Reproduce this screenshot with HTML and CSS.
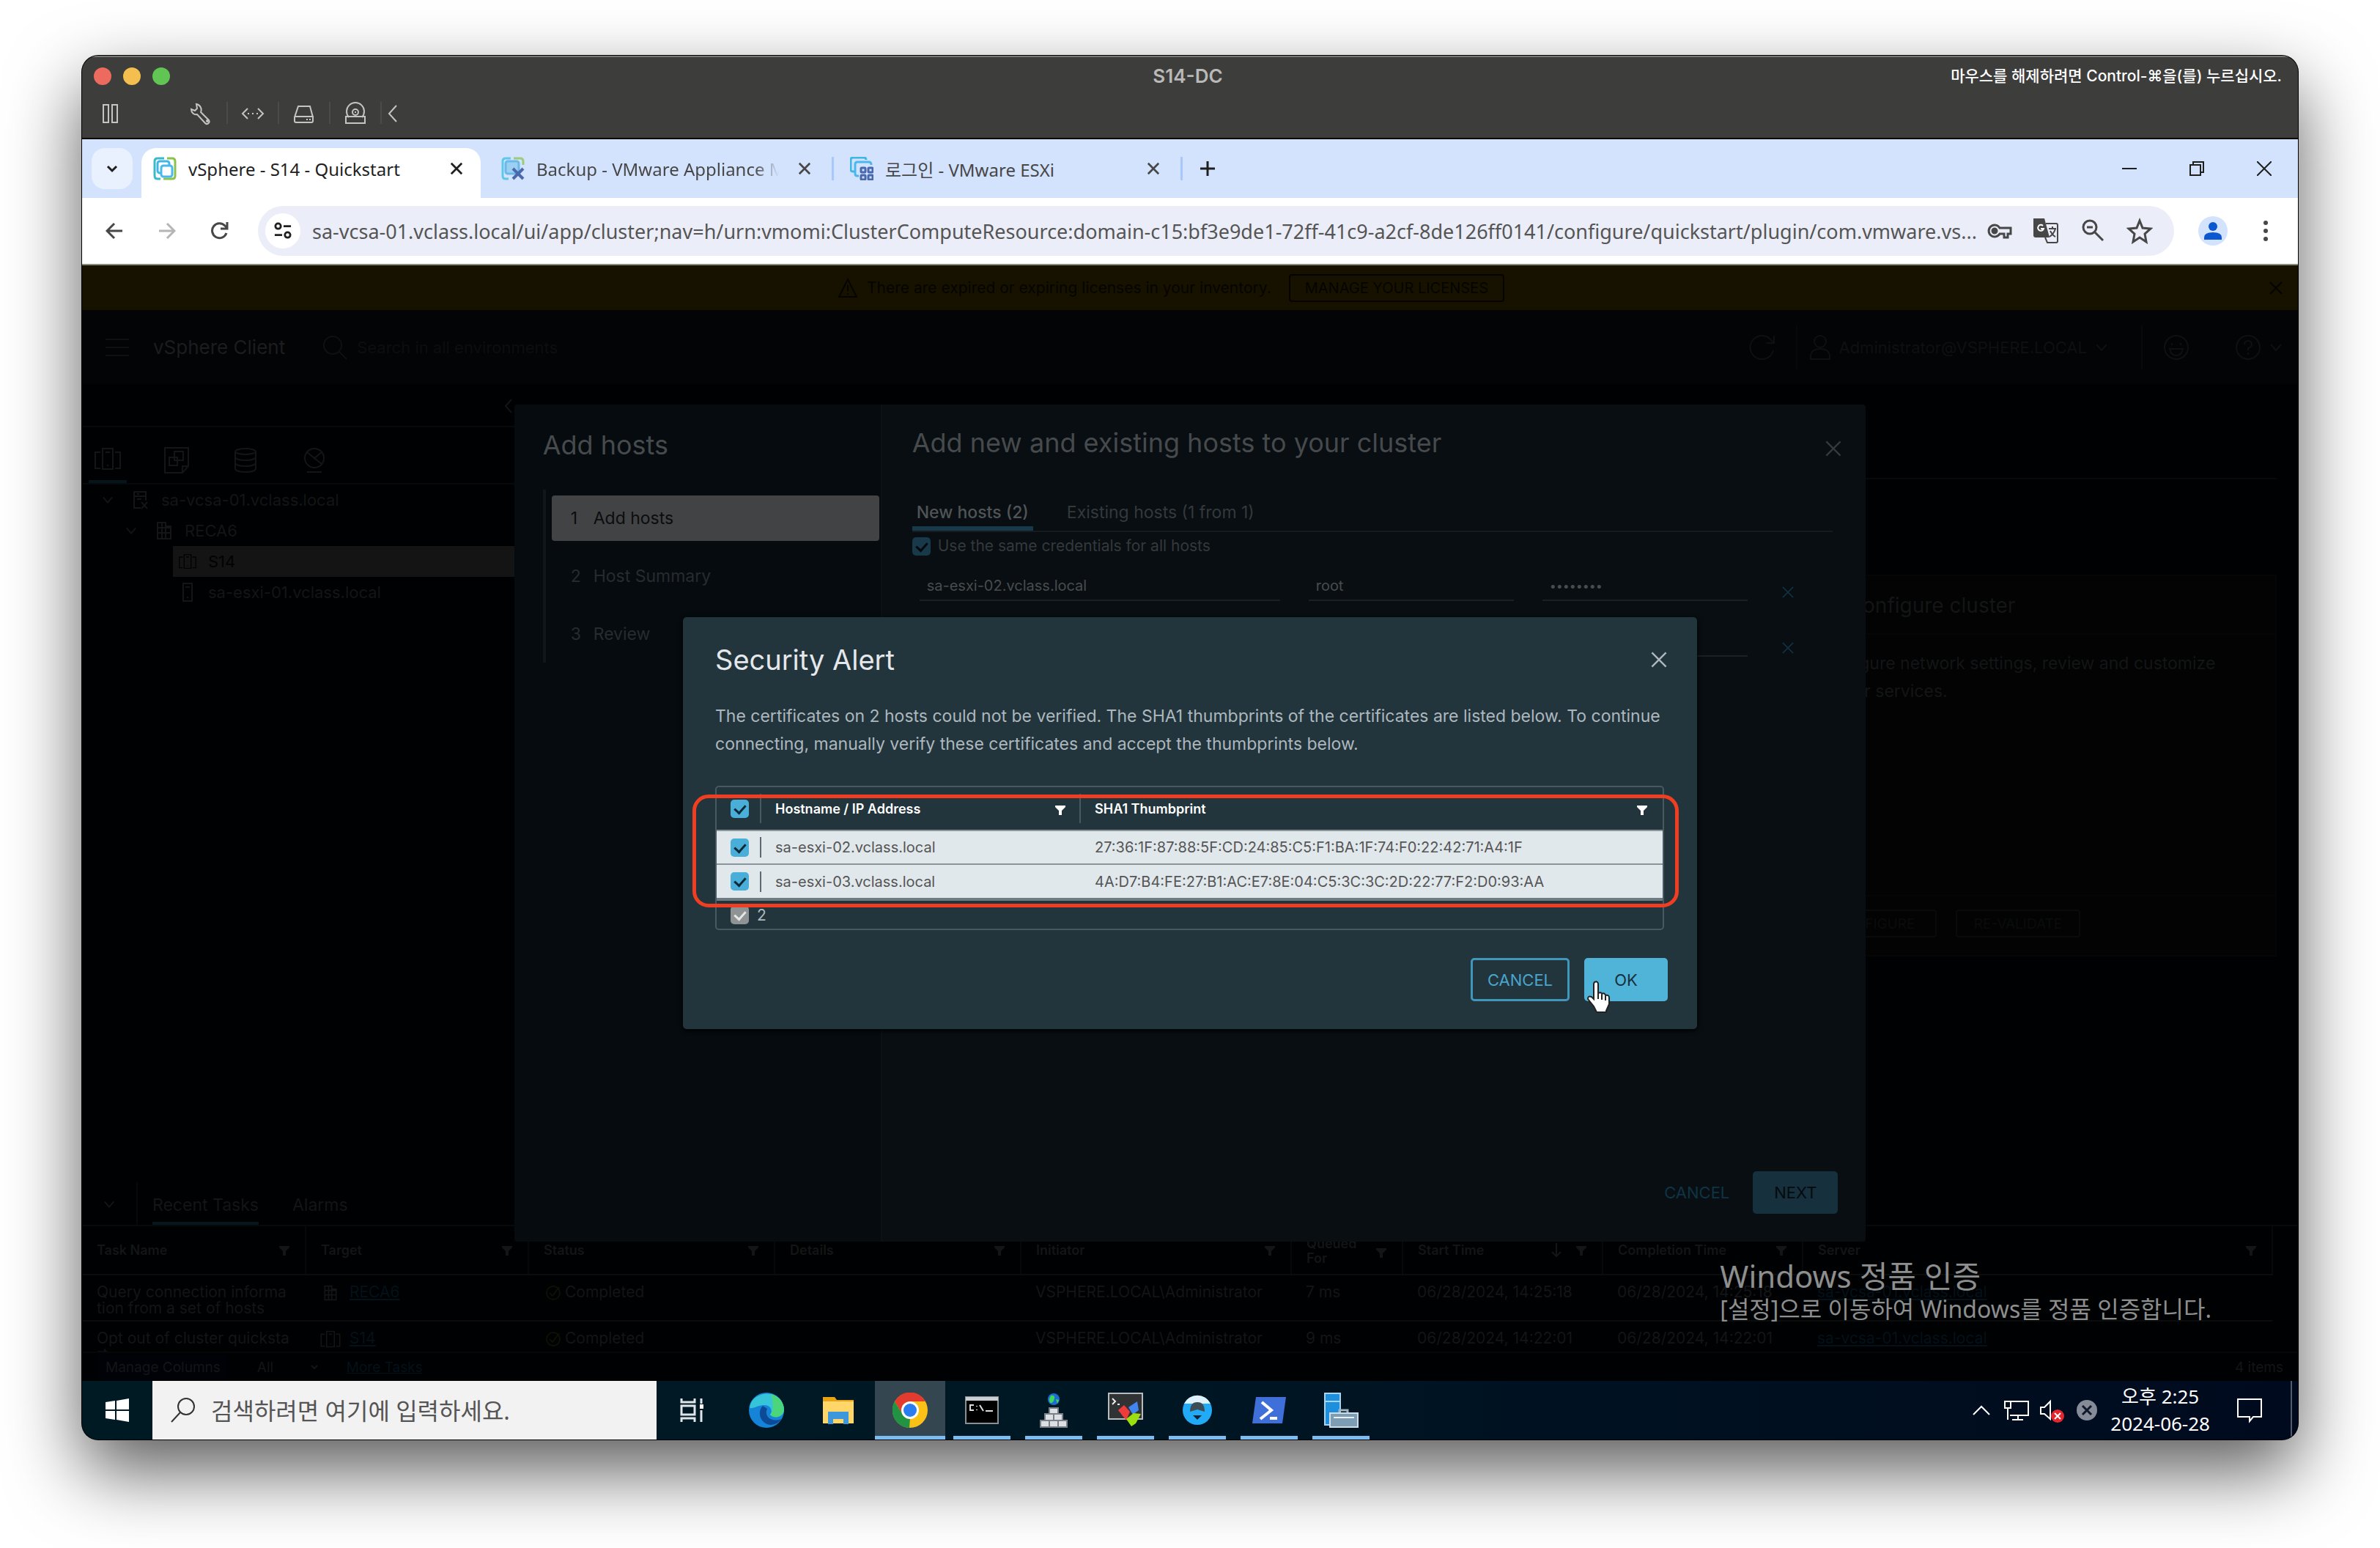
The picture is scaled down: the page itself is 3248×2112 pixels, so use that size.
FILE: index.html
```html
<!doctype html>
<html lang="ko">
<head>
<meta charset="utf-8">
<meta name="viewport" content="width=device-width, initial-scale=1">
<title>S14-DC</title>
<link rel="stylesheet" href="styles.css">
</head>

<body>
<svg class="sprite" aria-hidden="true">
	<symbol id="i-x" viewBox="0 0 20 20"><path d="M2 2l16 16M18 2L2 18"/></symbol>
	<symbol id="i-down" viewBox="0 0 20 20"><path d="M3 6l7 8 7-8"/></symbol>
	<symbol id="i-left" viewBox="0 0 20 20"><path d="M14 1L6 10l8 9"/></symbol>
	<symbol id="i-filter" viewBox="0 0 16 16"><path d="M1 2h14v2l-5 5v6H6V9L1 4z" fill="currentColor" stroke="none"/></symbol>
	<symbol id="i-search" viewBox="0 0 36 36"><circle cx="15" cy="15" r="12"/><path d="M24 24l10 10"/></symbol>
	<symbol id="i-vc" viewBox="0 0 24 28"><path d="M12 25H3V3h16v12M3 9h16M7 6h3M7 13h6M13 17l8 9M21 17l-8 9"/></symbol>
	<symbol id="i-dc" viewBox="0 0 24 28"><path d="M3 3h11v22H3zM14 8h7v17h-7M3 10h18M3 17h18M9 3v22"/></symbol>
	<symbol id="i-cluster" viewBox="0 0 36 32"><path d="M11 2h14v28H11zM8 7H1v22h7M28 7h7v22h-7M15 7h6M18 24v2"/></symbol>
	<symbol id="i-host" viewBox="0 0 20 28"><path d="M4 2h12v24H4zM7 7h6M10 20v2"/></symbol>
	<symbol id="i-ok" viewBox="0 0 24 24"><circle cx="12" cy="12" r="9"/><path d="M7 12l4 4 9-12"/></symbol>
</svg>

<div class="vm-janela">

	<!-- barra do mac -->
	<header class="mac-barra">
		<div class="mac-titulo">
			<div class="mac-luzes"><button class="vermelho" aria-label="close"></button><button class="amarelo" aria-label="minimize"></button><button class="verde" aria-label="zoom"></button></div>
			<h1>S14-DC</h1>
			<span class="mac-dica">마우스를 해제하려면 Control-⌘을(를) 누르십시오.</span>
		</div>
		<div class="mac-icones">
			<button class="mac-pausa" aria-label="pause"><svg viewBox="0 0 28 32"><path d="M5 4h7v24H5zM17 4h7v24h-7z"/></svg></button>
			<button aria-label="settings"><svg viewBox="0 0 32 32"><path d="M9 3l1 6-3 3-5-2c0 5 4 8 8 7l11 12c3 3 7-1 5-4L15 14c2-5-1-10-6-11z"/><circle cx="24" cy="26" r="1"/></svg></button>
			<button aria-label="network"><svg viewBox="0 0 32 32"><path d="M9 9l-7 7 7 7M23 9l7 7-7 7"/><path d="M9 16h15" stroke-dasharray="2 4"/></svg></button>
			<button aria-label="disk"><svg viewBox="0 0 32 32"><path d="M8 6h16l4 15v5q0 2-2 2H5q-2 0-2-2v-5L8 6zM3 20h26M19 24h2M23 24h2"/></svg></button>
			<button aria-label="cd"><svg viewBox="0 0 32 32"><path d="M7 21a12 12 0 1 1 18 0"/><circle cx="16" cy="14" r="4"/><path d="M3 20h26v9H3zM16 13v2"/></svg></button>
			<button class="mac-seta" aria-label="back"><svg viewBox="0 0 16 32"><path d="M13 5L3 16l10 11"/></svg></button>
		</div>
	</header>

	<!-- abas do chrome -->
	<nav class="abas">
		<button class="abas-lista" aria-label="tabs"><svg viewBox="0 0 20 20"><path d="M4 7l6 6 6-6"/></svg></button>
		<div class="aba ativa">
			<svg class="aba-icone" viewBox="0 0 32 32"><path d="M15 2H6Q2 2 2 6v20q0 4 4 4h4" stroke="#3bb9c9"/><path d="M19 2h7q4 0 4 4v20q0 4-4 4H14" stroke="#8bc34a"/><rect x="6" y="6" width="16" height="16" rx="3" stroke="#41b6e6"/><rect x="11" y="12" width="15" height="15" rx="3" stroke="#4ab8ef" fill="#fff"/></svg>
			<span class="aba-texto">vSphere - S14 - Quickstart</span>
			<button class="aba-fechar" aria-label="close tab"><svg viewBox="0 0 20 20"><use href="#i-x"/></svg></button>
		</div>
		<div class="aba">
			<svg class="aba-icone" viewBox="0 0 32 32"><path d="M13 2H6Q2 2 2 6v20q0 4 4 4h4" stroke="#5cc9e8"/><path d="M17 2h9q4 0 4 4v5" stroke="#9ccc7a"/><rect x="6" y="6" width="18" height="17" rx="3" stroke="#6bb9ea" fill="#9bd0f3"/><path d="M16 16l14 14M30 16L16 30" stroke="#4a69ad" stroke-width="4"/></svg>
			<span class="aba-texto aba-cortada">Backup - VMware Appliance Management</span>
			<button class="aba-fechar" aria-label="close tab"><svg viewBox="0 0 20 20"><use href="#i-x"/></svg></button>
		</div>
		<div class="aba">
			<svg class="aba-icone" viewBox="0 0 32 32"><path d="M6 20H4q-3 0-3-3V4q0-3 3-3h15q3 0 3 3" stroke="#41b6e6"/><path d="M12 26h-2q-3 0-3-3V10q0-3 3-3h16q3 0 3 4" stroke="#4ab8ef"/><g stroke="#4a69ad"><rect x="15" y="15" width="6" height="6" rx="1"/><rect x="25" y="15" width="6" height="6" rx="1"/><rect x="15" y="25" width="6" height="6" rx="1"/><rect x="25" y="25" width="6" height="6" rx="1"/></g></svg>
			<span class="aba-texto">로그인 - VMware ESXi</span>
			<button class="aba-fechar" aria-label="close tab"><svg viewBox="0 0 20 20"><use href="#i-x"/></svg></button>
		</div>
		<button class="aba-nova" aria-label="new tab"><svg viewBox="0 0 20 20"><path d="M10 0v20M0 10h20"/></svg></button>
		<div class="janela-botoes">
			<button aria-label="minimize"><svg viewBox="0 0 20 20"><path d="M0 10h20"/></svg></button>
			<button aria-label="restore"><svg viewBox="0 0 20 20"><path d="M1 5h14v14H1zM5 5V1h14v14h-4"/></svg></button>
			<button aria-label="close"><svg viewBox="0 0 20 20"><path d="M0 0l20 20M20 0L0 20"/></svg></button>
		</div>
	</nav>

	<div class="navegacao">
		<button aria-label="back"><svg viewBox="0 0 24 24"><path d="M23 12H2M12 2L2 12l10 10"/></svg></button>
		<button class="apagado" aria-label="forward"><svg viewBox="0 0 24 24"><path d="M1 12h21M12 2l10 10-10 10"/></svg></button>
		<button aria-label="reload"><svg viewBox="0 0 24 24"><path d="M21 15a10 10 0 1 1-2-10l3 3M22 0v9h-9"/></svg></button>
		<div class="endereco">
			<span class="endereco-info"><svg viewBox="0 0 26 26"><circle cx="6" cy="6" r="4"/><path d="M14 6h11M1 19h11"/><circle cx="20" cy="19" r="4"/></svg></span>
			<input type="text" aria-label="address" value="sa-vcsa-01.vclass.local/ui/app/cluster;nav=h/urn:vmomi:ClusterComputeResource:domain-c15:bf3e9de1-72ff-41c9-a2cf-8de126ff0141/configure/quickstart/plugin/com.vmware.vs...">
			<button aria-label="passwords"><svg viewBox="0 0 36 36"><path d="M19 14a8 8 0 1 0 0 8h6v5h5v-5h4v-8z"/><circle cx="12" cy="18" r="3" fill="currentColor"/></svg></button>
			<button aria-label="translate"><svg viewBox="0 0 36 36"><path d="M1 1h15l7 26H4q-3 0-3-3z" fill="currentColor" stroke="none"/><path d="M18 8h14q2 0 2 2v22q0 2-2 2H20l-3-7" stroke-width="2"/><path d="M22 15h10M27 12v3M31 15q-2 7-8 11M24 18q3 6 7 8" stroke-width="2"/><path d="M14 11a4 4 0 1 0 1 4h-4" stroke="#fff" stroke-width="2"/></svg></button>
			<button aria-label="zoom"><svg viewBox="0 0 36 36"><circle cx="14" cy="13" r="9"/><path d="M21 20l11 11M10 13h8"/></svg></button>
			<button aria-label="bookmark"><svg viewBox="0 0 36 36"><path d="M18 4l4 10 11 1-8 7 2 11-9-6-9 6 2-11-8-7 11-1z"/></svg></button>
		</div>
		<button class="perfil" aria-label="profile"><svg viewBox="0 0 40 40"><circle cx="20" cy="20" r="20" fill="#d3e3fd" stroke="none"/><circle cx="20" cy="14" r="6" fill="#0b57d0" stroke="none"/><path d="M8 32v-3q0-7 12-7t12 7v3z" fill="#0b57d0" stroke="none"/></svg></button>
		<button class="menu" aria-label="menu"><svg viewBox="0 0 8 30"><g fill="currentColor" stroke="none"><circle cx="4" cy="4" r="3"/><circle cx="4" cy="15" r="3"/><circle cx="4" cy="26" r="3"/></g></svg></button>
	</div>

	<!-- vsphere -->
	<main class="pagina">
		<div class="aviso">
			<svg viewBox="0 0 28 28"><path d="M14 2l12 24H2zM14 10v8M14 21v2"/></svg>
			<span>There are expired or expiring licenses in your inventory.</span>
			<button>MANAGE YOUR LICENSES</button>
			<button class="aviso-fechar" aria-label="close"><svg viewBox="0 0 20 20"><use href="#i-x"/></svg></button>
		</div>
		<div class="vs-topo">
			<svg class="vs-menu" viewBox="0 0 32 28"><path d="M0 3h32M0 14h32M0 25h32"/></svg>
			<span class="vs-nome">vSphere Client</span>
			<svg class="vs-lupa"><use href="#i-search"/></svg>
			<input type="text" aria-label="search" placeholder="Search in all environments">
			<div class="vs-direita">
				<svg class="g" viewBox="0 0 36 36"><path d="M33 22a16 16 0 1 1-3-14l4 4M34 2v10H24"/></svg>
				<div class="vs-usuario">
					<svg viewBox="0 0 30 36"><circle cx="15" cy="10" r="8"/><path d="M2 34V28q2-8 13-8t13 8v6z"/></svg>
					<span>Administrator@VSPHERE.LOCAL</span>
					<svg class="p"><use href="#i-down"/></svg>
				</div>
				<svg class="g" viewBox="0 0 36 36"><circle cx="18" cy="18" r="16"/><path d="M9 20h18q-2 9-9 9t-9-9zM12 12v3M24 12v3"/></svg>
				<div class="vs-ajuda">
					<svg class="g" viewBox="0 0 36 36"><circle cx="18" cy="18" r="16"/><path d="M13 14q0-5 5-5t5 5q0 3-5 5v3M18 25v3"/></svg>
					<svg class="p"><use href="#i-down"/></svg>
				</div>
			</div>
		</div>

		<div class="vs-corpo">
			<aside class="vs-lado">
				<div class="vs-lado-vazio"><svg><use href="#i-left"/></svg></div>
				<div class="vs-lado-abas">
					<span class="sel"><svg><use href="#i-cluster"/></svg></span>
					<span><svg viewBox="0 0 36 36"><path d="M2 1h32v25l-8 9H2zM15 6h12v12H15zM8 14h11v11H8zM26 35v-9h8"/></svg></span>
					<span><svg viewBox="0 0 36 36"><ellipse cx="18" cy="6" rx="14" ry="4"/><path d="M4 6v24q2 4 14 4t14-4V6M4 14q2 4 14 4t14-4M4 22q2 4 14 4t14-4"/></svg></span>
					<span><svg viewBox="0 0 36 36"><circle cx="18" cy="15" r="13"/><path d="M8 7l20 16M28 7L17 16M8 34h20"/></svg></span>
				</div>
				<ul class="arvore">
					<li><svg class="seta"><use href="#i-down"/></svg><svg><use href="#i-vc"/></svg>sa-vcsa-01.vclass.local</li>
					<li class="n2"><svg class="seta"><use href="#i-down"/></svg><svg><use href="#i-dc"/></svg>RECA6</li>
					<li class="n3 marcado"><svg><use href="#i-cluster"/></svg>S14</li>
					<li class="n3"><svg><use href="#i-host"/></svg>sa-esxi-01.vclass.local</li>
				</ul>
			</aside>
			<section class="vs-conteudo">
				<div class="vs-cabeca"></div>
				<article class="cartao">
					<h2>3. Configure cluster</h2>
					<p>Configure network settings, review and customize cluster services.</p>
					<div class="cartao-botoes"><button>CONFIGURE</button><button>RE-VALIDATE</button></div>
				</article>
			</section>
		</div>

		<section class="tarefas">
			<div class="tarefas-abas">
				<svg><use href="#i-down"/></svg>
				<span class="sel">Recent Tasks</span>
				<span>Alarms</span>
			</div>
			<div class="tarefas-lista">
				<table>
					<colgroup><col class="c1"><col class="c2"><col class="c3"><col class="c4"><col class="c5"><col class="c6"><col class="c7"><col class="c7"><col></colgroup>
					<thead>
						<tr>
							<th><div>Task Name<svg><use href="#i-filter"/></svg></div></th>
							<th><div>Target<svg><use href="#i-filter"/></svg></div></th>
							<th><div>Status<svg><use href="#i-filter"/></svg></div></th>
							<th><div>Details<svg><use href="#i-filter"/></svg></div></th>
							<th><div>Initiator<svg><use href="#i-filter"/></svg></div></th>
							<th class="dupla"><div>Queued<br>For<svg><use href="#i-filter"/></svg></div></th>
							<th><div>Start Time<svg class="ordem" viewBox="0 0 16 20"><path d="M8 0v18M2 12l6 6 6-6"/></svg><svg><use href="#i-filter"/></svg></div></th>
							<th><div>Completion Time<svg><use href="#i-filter"/></svg></div></th>
							<th><div>Server<svg><use href="#i-filter"/></svg></div></th>
						</tr>
					</thead>
					<tbody>
						<tr>
							<td>Query connection informa<br>tion from a set of hosts</td>
							<td><svg><use href="#i-dc"/></svg> <a href="#">RECA6</a></td>
							<td><svg class="feito"><use href="#i-ok"/></svg>Completed</td>
							<td></td>
							<td>VSPHERE.LOCAL\Administrator</td>
							<td>7 ms</td>
							<td>06/28/2024, 14:25:18</td>
							<td>06/28/2024, 14:25:18</td>
							<td><a href="#">sa-vcsa-01.vclass.local</a></td>
						</tr>
						<tr>
							<td>Opt out of cluster quicksta<br>rt</td>
							<td><svg><use href="#i-cluster"/></svg> <a href="#">S14</a></td>
							<td><svg class="feito"><use href="#i-ok"/></svg>Completed</td>
							<td></td>
							<td>VSPHERE.LOCAL\Administrator</td>
							<td>9 ms</td>
							<td>06/28/2024, 14:22:01</td>
							<td>06/28/2024, 14:22:01</td>
							<td><a href="#">sa-vcsa-01.vclass.local</a></td>
						</tr>
					</tbody>
				</table>
			</div>
			<div class="tarefas-pe">
				<button>Manage Columns</button>
				<select aria-label="filter"><option>All</option></select>
				<a href="#">More Tasks</a>
				<span>4 items</span>
			</div>
		</section>

		<!-- assistente Add hosts -->
		<div class="camada">
			<div class="assistente">
				<div class="passos">
					<h2>Add hosts</h2>
					<ol>
						<li class="atual"><span>1</span>Add hosts</li>
						<li><span>2</span>Host Summary</li>
						<li><span>3</span>Review</li>
					</ol>
				</div>
				<div class="painel">
					<div class="painel-topo">
						<h2>Add new and existing hosts to your cluster</h2>
						<button aria-label="close"><svg><use href="#i-x"/></svg></button>
					</div>
					<div class="painel-abas">
						<button class="sel">New hosts (2)</button>
						<button>Existing hosts (1 from 1)</button>
					</div>
					<label class="mesma"><input type="checkbox" class="caixa" checked>Use the same credentials for all hosts</label>
					<div class="linha-host">
						<input type="text" class="host" aria-label="host" value="sa-esxi-02.vclass.local">
						<input type="text" class="conta" aria-label="user" value="root">
						<input type="password" class="conta" aria-label="password" value="password">
						<button aria-label="remove"><svg><use href="#i-x"/></svg></button>
					</div>
					<div class="linha-host">
						<input type="text" class="host" aria-label="host" value="sa-esxi-03.vclass.local">
						<input type="text" class="conta" aria-label="user" value="root">
						<input type="password" class="conta" aria-label="password" value="password">
						<button aria-label="remove"><svg><use href="#i-x"/></svg></button>
					</div>
					<div class="painel-pe">
						<button class="cancelar">CANCEL</button>
						<button class="proximo">NEXT</button>
					</div>
				</div>
			</div>
		</div>

		<!-- alerta -->
		<div class="camada">
			<div class="alerta" role="dialog" aria-labelledby="alerta-titulo">
				<div class="alerta-topo">
					<h2 id="alerta-titulo">Security Alert</h2>
					<button aria-label="close"><svg><use href="#i-x"/></svg></button>
				</div>
				<p>The certificates on 2 hosts could not be verified. The SHA1 thumbprints of the certificates are listed below. To continue connecting, manually verify these certificates and accept the thumbprints below.</p>
				<div class="grade">
					<table>
						<colgroup><col class="g1"><col class="g2"><col></colgroup>
						<thead>
							<tr>
								<th><input type="checkbox" class="caixa" aria-label="all" checked></th>
								<th><div>Hostname / IP Address<svg><use href="#i-filter"/></svg></div></th>
								<th><div>SHA1 Thumbprint<svg><use href="#i-filter"/></svg></div></th>
							</tr>
						</thead>
						<tbody>
							<tr>
								<td><input type="checkbox" class="caixa" aria-label="sa-esxi-02" checked></td>
								<td>sa-esxi-02.vclass.local</td>
								<td>27:36:1F:87:88:5F:CD:24:85:C5:F1:BA:1F:74:F0:22:42:71:A4:1F</td>
							</tr>
							<tr>
								<td><input type="checkbox" class="caixa" aria-label="sa-esxi-03" checked></td>
								<td>sa-esxi-03.vclass.local</td>
								<td>4A:D7:B4:FE:27:B1:AC:E7:8E:04:C5:3C:3C:2D:22:77:F2:D0:93:AA</td>
							</tr>
						</tbody>
					</table>
					<label class="grade-pe"><input type="checkbox" class="caixa cinza" checked disabled>2</label>
					<div class="destaque"></div>
				</div>
				<div class="alerta-pe">
					<button class="contorno">CANCEL</button>
					<div class="com-cursor">
						<button class="cheio">OK</button>
						<svg class="cursor" viewBox="0 0 34 46"><path d="M11 3q4-2 5 2v13q4-2 5 1 4-2 5 2 5-1 5 3v9l-4 9v2H14L10 36 2 26q0-5 5-3l3 3V6q0-2 1-3z" fill="#fff" stroke="#222" stroke-width="2"/><path d="M16 18v8M21 20v7M26 22v6" stroke="#222" stroke-width="2"/></svg>
					</div>
				</div>
			</div>
		</div>

		<div class="ativacao">
			<strong>Windows 정품 인증</strong>
			<span>[설정]으로 이동하여 Windows를 정품 인증합니다.</span>
		</div>
	</main>

	<!-- barra de tarefas -->
	<footer class="barra">
		<button class="iniciar" aria-label="start"><svg viewBox="0 0 32 32"><path d="M0 5l13-2v12H0zM15 3l17-3v15H15zM0 17h13v12L0 27zM15 17h17v15l-17-3z" fill="#fff" stroke="none"/></svg></button>
		<label class="busca">
			<svg viewBox="0 0 36 36"><circle cx="22" cy="13" r="11"/><path d="M14 21L2 34"/></svg>
			<input type="text" placeholder="검색하려면 여기에 입력하세요.">
		</label>
		<div class="apps">
			<button aria-label="task view"><svg viewBox="0 0 48 48"><path d="M9 8v5h18V8M9 40v-5h18v5M9 18h18v12H9zM36 8v7M36 24v16" stroke="#dfe6ea" stroke-width="3"/><path d="M34 16h5v6h-5z" fill="#fff"/></svg></button>
			<button aria-label="edge"><svg viewBox="0 0 48 48"><circle cx="24" cy="24" r="24" fill="#1583d8"/><path d="M1 20C5-4 45-6 48 22c1 12-14 14-19 8 4-5 1-13-8-13S3 24 1 20z" fill="#36c5d8"/><path d="M30 2c14 4 20 16 17 25-4 8-14 8-18 3 6-6 4-18 1-28z" fill="#4bd67b"/><path d="M19 18c-8 8-4 24 10 26 8 0 13-4 15-8-12 5-24-3-19-14z" fill="#0d4a95"/></svg></button>
			<button aria-label="explorer"><svg viewBox="0 0 48 48"><path d="M3 6h16l3 4h23v30H3z" fill="#e8a317"/><path d="M3 12h42v30H3z" fill="#ffd667"/><path d="M10 26h28v17h-7v-7H17v7h-7z" fill="#3d97dc"/></svg></button>
			<button class="aberto foco" aria-label="chrome"><svg viewBox="0 0 48 48"><circle cx="24" cy="24" r="24" fill="#fbc116"/><path d="M3 12a24 24 0 0 1 42 0H24L14 30z" fill="#e33b2e"/><path d="M3 12l11 18 10 5-1 13A24 24 0 0 1 3 12z" fill="#229342"/><circle cx="24" cy="24" r="12" fill="#fff"/><circle cx="24" cy="24" r="9" fill="#2a7df0"/></svg></button>
			<button class="aberto" aria-label="cmd"><svg viewBox="0 0 48 48"><path d="M2 6h44v36H2z" fill="#000" stroke="#8a8f93" stroke-width="2"/><path d="M2 6h44v5H2z" fill="#c9ced2"/><path d="M13 17H8v7h5M17 18v1M17 23v1M21 17l5 8M29 25h10" stroke="#ddd" stroke-width="2"/></svg></button>
			<button class="aberto" aria-label="network"><svg viewBox="0 0 48 48"><circle cx="24" cy="9" r="8" fill="#1c6fd0"/><path d="M20 4q6-1 5 4t-4 6-3-5zM27 9l4 1-2 5z" fill="#3fd65a"/><g fill="#dcdfe3" stroke="#7b8086"><path d="M18 21h12v8H18zM12 29h12v9H12zM24 29h12v9H24zM6 38h12v9H6zM18 38h12v9H18zM30 38h12v9H30z"/></g></svg></button>
			<button class="aberto" aria-label="mobaxterm"><svg viewBox="0 0 48 48"><path d="M1 1h46v35H1z" fill="#303234" stroke="#b9bcbf" stroke-width="2"/><path d="M6 8l4 4-4 4M13 16h3" stroke="#eee" stroke-width="2"/><path d="M14 24l8-7 8 9-5 12z" fill="#ee3b3b"/><path d="M28 20l12-8 2 12-8 6z" fill="#3f86f0"/><path d="M25 36l10-8 10 1-7 13-6 4z" fill="#9be00e"/></svg></button>
			<button class="aberto" aria-label="client"><svg viewBox="0 0 48 48"><circle cx="24" cy="24" r="20" fill="#21aaf5"/><path d="M6 15a20 20 0 0 1 36 0z" fill="#dff1fb"/><path d="M14 26q0-13 10-13t10 13l-10-3z" fill="#3d4d58"/><path d="M18 31h12l-6 6z" fill="#123"/></svg></button>
			<button class="aberto" aria-label="powershell"><svg viewBox="0 0 48 48"><path d="M6 6h41l-5 36H1z" fill="#3f6fd8"/><path d="M14 13l13 11-15 12M25 35h10" stroke="#fff" stroke-width="4"/></svg></button>
			<button class="aberto" aria-label="server manager"><svg viewBox="0 0 48 48"><path d="M2 1h21v43H2z" fill="#1e8fdd" stroke="#a9d4f0" stroke-width="2"/><path d="M2 12h21" stroke="#a9d4f0" stroke-width="2"/><path d="M22 28v-4h11v4" stroke="#9fb6c4" stroke-width="3"/><path d="M9 28h38v19H9z" fill="#7c9db3" stroke="#cfdde6" stroke-width="2"/><path d="M14 34h28" stroke="#e8f0f5" stroke-width="2"/></svg></button>
		</div>
		<div class="bandeja">
			<svg viewBox="0 0 36 36"><path d="M7 24l11-11 11 11"/></svg>
			<svg viewBox="0 0 36 36"><path d="M9 6h25v19H9M2 6h8v9H2zM6 15v16M20 25v6M12 31h15"/></svg>
			<svg viewBox="0 0 36 36"><path d="M3 14h5l8-8v24l-8-7H3z"/><circle cx="26" cy="26" r="9" fill="#e3262e" stroke="none"/><path d="M22 22l8 8M30 22l-8 8"/></svg>
			<svg viewBox="0 0 36 36"><circle cx="18" cy="18" r="14" fill="#868b98" stroke="none"/><path d="M12 12l12 12M24 12L12 24" stroke="#10182a" stroke-width="3"/></svg>
			<div class="relogio">오후 2:25<br>2024-06-28</div>
			<svg class="notas" viewBox="0 0 36 36"><path d="M2 3h32v24H23l-5 6v-6H2z"/></svg>
			<i></i>
		</div>
	</footer>
</div>
</body>
</html>
```
FILE: styles.css
```css
*
{
	margin: 0;
	padding: 0;
	box-sizing: border-box;
}
body
{
	display: flex;
	min-height: 100vh;
	padding: 76px 112px 148px;
	background-color: #FFF;
	font-family: Inter, "Noto Sans CJK KR", sans-serif;
	font-size: 23px;
}
button, input, select
{
	font: inherit;
	color: inherit;
	background: none;
	border: none;
	outline: none;
}
svg
{
	display: block;
	flex: none;
	fill: none;
	stroke: currentColor;
	stroke-width: 2px;
}
.sprite
{
	position: absolute;
	width: 0;
	height: 0;
}
h1, h2
{
	font-weight: 400;
}
.vm-janela
{
	flex: 1;
	min-width: 0;
	display: flex;
	flex-direction: column;
	overflow: hidden;
	border-radius: 22px;
	background-color: #000102;
	box-shadow: 0 0 0 1px #000, 0 42px 100px rgba(0,0,0,.65);
}

/* barra do mac */
.mac-barra
{
	height: 114px;
	background-color: #3d3d3b;
	border-top: 2px solid #777772;
	border-bottom: 2px solid #000;
}
.mac-titulo
{
	display: grid;
	grid-template-columns: 1fr auto 1fr;
	align-items: center;
	height: 52px;
	padding: 0 22px 0 16px;
}
.mac-titulo h1
{
	font-size: 26px;
	line-height: 30px;
	font-weight: 600;
	color: #b9b9b8;
}
.mac-luzes
{
	display: flex;
	gap: 16px;
}
.mac-luzes button
{
	width: 24px;
	height: 24px;
	border-radius: 50%;
}
.vermelho { background-color: #ed6a5e; }
.amarelo { background-color: #f4bf4f; }
.verde { background-color: #61c554; }
.mac-dica
{
	justify-self: end;
	font-size: 21px;
	line-height: 30px;
	font-weight: 500;
	color: #FFF;
}
.mac-icones
{
	display: flex;
	align-items: center;
	height: 48px;
	padding-left: 12px;
	color: #c4c4c3;
}
.mac-icones button
{
	display: flex;
	justify-content: center;
	width: 70px;
	height: 30px;
	border-right: 2px solid #4b4b49;
}
.mac-icones button svg
{
	height: 32px;
	width: 32px;
}
.mac-icones .mac-pausa
{
	width: 56px;
	margin-right: 61px;
	justify-content: start;
	padding-left: 10px;
	border: none;
}
.mac-icones .mac-seta
{
	width: 30px;
	border: none;
}

/* chrome */
.abas
{
	display: flex;
	height: 80px;
	padding: 12px 0 0 13px;
	background-color: #d3e3fd;
	color: #1f1f1f;
	font-family: "Noto Sans", "Noto Sans CJK KR", sans-serif;
}
.abas-lista
{
	display: flex;
	align-items: center;
	justify-content: center;
	width: 56px;
	height: 56px;
	margin-right: 12px;
	border-radius: 18px;
	background-color: #e9f1fe;
}
.abas svg
{
	width: 20px;
	height: 20px;
	stroke-width: 3px;
}
.aba
{
	display: flex;
	align-items: center;
	width: 470px;
	margin-right: 6px;
	padding: 0 26px 12px 16px;
	color: #474747;
	border-right: 3px solid transparent;
	border-image: linear-gradient(transparent 18%, #a8c7fa 18%, #a8c7fa 64%, transparent 64%) 1;
}
.aba.ativa
{
	width: 463px;
	margin-right: 12px;
	padding-right: 22px;
	border: none;
	border-radius: 20px 20px 0 0;
	background-color: #FFF;
	color: #1f1f1f;
}
.aba .aba-icone
{
	width: 32px;
	height: 32px;
	margin-right: 16px;
}
.aba-texto
{
	flex: 1;
	overflow: hidden;
	white-space: nowrap;
	font-size: 24px;
}
.aba-cortada
{
	margin-right: 24px;
	mask-image: linear-gradient(90deg, #000 90%, transparent);
}
.aba-fechar
{
	padding: 2px;
}
.aba .aba-fechar svg
{
	width: 18px;
	height: 18px;
}
.aba-nova
{
	height: 56px;
	margin-left: 18px;
}
.janela-botoes
{
	display: flex;
	gap: 72px;
	height: 56px;
	margin-left: auto;
	padding-right: 36px;
}
.janela-botoes svg
{
	stroke-width: 2px;
}
.navegacao
{
	display: flex;
	align-items: center;
	height: 92px;
	padding: 0 40px 0 32px;
	background-color: #FFF;
	border-bottom: 2px solid #8b8a80;
	color: #474747;
}
.navegacao > button
{
	width: 24px;
	margin-right: 48px;
}
.navegacao > button:nth-child(3)
{
	margin-right: 40px;
}
.navegacao svg
{
	width: 24px;
	stroke-width: 3px;
}
.navegacao .apagado
{
	color: #b5b5b5;
}
.endereco
{
	flex: 1;
	min-width: 0;
	display: flex;
	align-items: center;
	gap: 28px;
	height: 68px;
	padding: 0 29px 0 10px;
	border-radius: 34px;
	background-color: #ebeef8;
}
.endereco-info
{
	display: flex;
	align-items: center;
	justify-content: center;
	width: 48px;
	height: 48px;
	margin-right: -12px;
	border-radius: 50%;
	background-color: #FFF;
	color: #1f1f1f;
}
.endereco input
{
	flex: 1;
	min-width: 0;
	margin-right: -26px;
	font-family: "Noto Sans", sans-serif;
	font-size: 27px;
	color: #555;
}
.endereco button svg
{
	width: 36px;
	height: 36px;
}
.navegacao .perfil
{
	width: 40px;
	margin: 0 48px 0 33px;
}
.perfil svg
{
	width: 40px;
}
.navegacao .menu
{
	width: 8px;
	margin: 0;
}
.menu svg
{
	width: 8px;
}

/* vsphere */
.pagina
{
	position: relative;
	flex: 1;
	display: flex;
	flex-direction: column;
	color: #131516;
}
.aviso
{
	display: flex;
	align-items: center;
	justify-content: center;
	gap: 12px;
	height: 61px;
	padding-right: 20px;
	background-color: #171200;
	color: #050400;
	font-size: 21px;
}
.aviso > svg:first-child
{
	width: 28px;
	margin-left: auto;
}
.aviso button
{
	height: 38px;
	margin-left: 12px;
	padding: 0 20px;
	border: 2px solid #050400;
	border-radius: 4px;
	font-size: 20px;
}
.aviso .aviso-fechar
{
	margin-left: auto;
	padding: 0;
	border: none;
}
.aviso-fechar svg
{
	width: 20px;
}
.vs-topo
{
	display: flex;
	align-items: center;
	height: 101px;
	padding: 0 20px 0 32px;
	background-color: #030406;
	color: #0e1011;
}
.vs-menu
{
	width: 32px;
	margin-right: 33px;
}
.vs-nome
{
	font-size: 26px;
	color: #1b1d1e;
}
.vs-lupa
{
	width: 36px;
	height: 36px;
	margin: 0 12px 0 50px;
}
.vs-topo input
{
	width: 400px;
	font-size: 22px;
}
.vs-topo input::placeholder
{
	color: #0c0e10;
}
.vs-direita
{
	display: flex;
	align-items: center;
	gap: 28px;
	margin-left: auto;
	font-size: 22px;
}
.vs-direita .g
{
	width: 36px;
	height: 36px;
}
.vs-direita .p
{
	width: 20px;
	height: 20px;
}
.vs-usuario, .vs-ajuda
{
	display: flex;
	align-items: center;
	gap: 10px;
	height: 60px;
}
.vs-usuario
{
	padding: 0 44px 0 16px;
	border-left: 2px solid #07090b;
	border-right: 2px solid #07090b;
}
.vs-usuario > svg:first-child
{
	width: 30px;
}
.vs-ajuda
{
	margin-left: 34px;
}
.vs-corpo
{
	flex: 1;
	display: flex;
	min-height: 0;
}
.vs-lado
{
	width: 592px;
}
.vs-lado-vazio
{
	display: flex;
	justify-content: flex-end;
	height: 59px;
	padding-top: 20px;
	border-bottom: 2px solid #07090a;
}
.vs-lado-vazio svg
{
	width: 20px;
	height: 20px;
}
.vs-lado-abas
{
	display: flex;
	gap: 42px;
	height: 78px;
	padding-left: 9px;
	border-bottom: 2px solid #07090a;
}
.vs-lado-abas span
{
	display: flex;
	align-items: center;
	justify-content: center;
	width: 52px;
	padding-top: 14px;
}
.vs-lado-abas .sel
{
	border-bottom: 4px solid #05151c;
}
.vs-lado-abas svg
{
	width: 36px;
	height: 36px;
}
.arvore
{
	list-style: none;
	font-size: 22px;
}
.arvore li
{
	display: flex;
	align-items: center;
	gap: 16px;
	height: 42px;
	padding-left: 26px;
}
.arvore svg
{
	width: 24px;
	height: 28px;
}
.arvore .seta
{
	width: 18px;
	height: 18px;
	margin-right: 8px;
}
.arvore .n2
{
	padding-left: 58px;
}
.arvore .n3
{
	margin-left: 124px;
	padding-left: 8px;
}
.arvore .marcado
{
	background-color: #131413;
	color: #020202;
}
.vs-conteudo
{
	flex: 1;
	display: flex;
	flex-direction: column;
	align-items: flex-end;
	padding-right: 29px;
}
.vs-cabeca
{
	width: 100%;
	height: 130px;
	margin-bottom: 130px;
	border-bottom: 2px solid #07090a;
}
.cartao
{
	width: 700px;
	border: 2px solid #050606;
	background-color: #020302;
}
.cartao h2
{
	height: 80px;
	padding-left: 80px;
	line-height: 80px;
	font-size: 28px;
	border-bottom: 2px solid #050606;
}
.cartao p
{
	height: 355px;
	padding: 20px 70px;
	line-height: 38px;
}
.cartao-botoes
{
	display: flex;
	gap: 26px;
	padding: 18px 0 24px 64px;
	border-top: 2px solid #050606;
}
.cartao-botoes button
{
	width: 170px;
	height: 38px;
	border: 2px solid #090b0b;
	border-radius: 4px;
	font-size: 19px;
	color: #0a0c0c;
}

/* recent tasks */
.tarefas a
{
	color: #03111a;
}
.tarefas-abas
{
	display: flex;
	align-items: stretch;
	gap: 46px;
	height: 60px;
	line-height: 62px;
	border-bottom: 2px solid #08090a;
}
.tarefas-abas svg
{
	width: 76px;
	height: 60px;
	padding: 20px 28px;
	margin-right: -26px;
	border-right: 2px solid #08090a;
}
.tarefas-abas .sel
{
	border-bottom: 4px solid #06171b;
}
.tarefas-lista
{
	height: 171px;
	overflow: hidden;
	padding-right: 34px;
}
.tarefas table
{
	width: 100%;
	table-layout: fixed;
	border-collapse: collapse;
	font-size: 21px;
	line-height: 22px;
}
.c1 { width: 305px; }
.c2 { width: 304px; }
.c3, .c4 { width: 336px; }
.c5 { width: 369px; }
.c6 { width: 152px; }
.c7 { width: 273px; }
.tarefas th
{
	height: 66px;
	padding: 23px 20px 0;
	text-align: left;
	vertical-align: top;
	font-size: 18px;
	font-weight: 600;
	line-height: 20px;
	border-right: 2px solid #070808;
	border-bottom: 2px solid #0b0c0c;
}
.tarefas .dupla
{
	padding-top: 14px;
}
.tarefas th div
{
	display: flex;
	flex-wrap: wrap;
	justify-content: space-between;
}
.tarefas .dupla div
{
	display: block;
	position: relative;
}
.tarefas .dupla svg
{
	position: absolute;
	right: 0;
	top: 12px;
}
.tarefas th svg
{
	width: 16px;
	height: 20px;
}
.tarefas th .ordem
{
	margin-left: auto;
	margin-right: 18px;
}
.tarefas td
{
	height: 63px;
	padding: 12px 0 0 20px;
	vertical-align: top;
	white-space: nowrap;
	border-bottom: 2px solid #0b0c0c;
}
.tarefas td svg
{
	display: inline-block;
	width: 28px;
	height: 24px;
	margin-right: 6px;
	vertical-align: middle;
}
.tarefas td .feito
{
	color: #0a1206;
	margin-right: 2px;
}
.tarefas-pe
{
	display: flex;
	align-items: center;
	gap: 36px;
	height: 40px;
	padding: 0 20px 0 22px;
	font-size: 19px;
	border-top: 2px solid #060707;
}
.tarefas-pe button
{
	height: 36px;
	padding: 0 10px;
	background-color: #010108;
}
.tarefas-pe select
{
	width: 90px;
}
.tarefas-pe span
{
	margin-left: auto;
}

/* camadas */
.camada
{
	position: absolute;
	inset: 0;
	display: flex;
	align-items: center;
	justify-content: center;
}
.caixa
{
	appearance: none;
	display: block;
	flex: none;
	width: 25px;
	height: 25px;
	border-radius: 5px;
	background-color: #49afd9;
	color: #0e2a38;
}
.caixa::after
{
	content: "";
	display: block;
	width: 7px;
	height: 12px;
	margin: 4px 0 0 8px;
	border: solid currentColor;
	border-width: 0 3px 3px 0;
	rotate: 42deg;
}
.assistente
{
	display: flex;
	width: 61%;
	min-height: 1142px;
	border-radius: 4px;
	overflow: hidden;
	background-color: #080e11;
	color: #34393c;
}
.assistente h2
{
	font-size: 36px;
	line-height: 42px;
	color: #464a4c;
}
.passos
{
	flex: none;
	width: 502px;
	padding: 34px 2px 0 39px;
	background-color: #050b0e;
	border-right: 2px solid #0b1114;
}
.passos ol
{
	display: flex;
	flex-direction: column;
	gap: 17px;
	margin-top: 40px;
	padding: 8px 0 8px 8px;
	list-style: none;
	border-left: 4px solid #10171b;
}
.passos li
{
	display: flex;
	height: 62px;
	padding-left: 26px;
	line-height: 62px;
	border-radius: 4px;
	color: #262c2f;
}
.passos li span
{
	width: 31px;
}
.passos .atual
{
	background-color: #424345;
	color: #0b0d0e;
}
.painel
{
	flex: 1;
	display: flex;
	flex-direction: column;
	padding: 31px 38px 38px 41px;
}
.painel-topo
{
	display: flex;
	justify-content: space-between;
}
.painel-topo svg
{
	width: 24px;
	height: 24px;
	margin: 16px -6px 0 0;
}
.painel-abas
{
	display: flex;
	gap: 40px;
	margin: 55px 7px 6px 0;
	border-bottom: 2px solid #151b1e;
}
.painel-abas button
{
	padding: 0 6px;
	line-height: 38px;
	border-bottom: 6px solid transparent;
}
.painel-abas .sel
{
	font-weight: 500;
	color: #505456;
	border-color: #17394a;
}
.mesma
{
	display: flex;
	align-items: center;
	gap: 10px;
	font-size: 21px;
	line-height: 26px;
	margin-bottom: 22px;
}
.mesma .caixa
{
	background-color: #17394a;
	color: #04090b;
}
.linha-host
{
	display: flex;
	gap: 39px;
	margin: 0 0 36px 10px;
	color: #484c4e;
}
.linha-host input
{
	height: 40px;
	padding: 0 10px;
	font-size: 20px;
	border-bottom: 2px solid #1b2022;
}
.linha-host input[type=password]
{
	font-size: 16px;
}
.host
{
	width: 492px;
}
.conta
{
	width: 280px;
}
.linha-host button
{
	padding: 16px 0 0 7px;
	color: #12303f;
}
.linha-host svg
{
	width: 18px;
	height: 18px;
}
.painel-pe
{
	display: flex;
	justify-content: flex-end;
	gap: 32px;
	margin-top: auto;
	font-size: 22px;
	letter-spacing: 1px;
}
.cancelar
{
	color: #0f3445;
}
.proximo
{
	width: 116px;
	height: 58px;
	border-radius: 5px;
	background-color: #17303e;
	color: #040a0d;
}

/* alerta */
.alerta
{
	width: 1384px;
	max-width: 96%;
	padding: 37px 40px 38px 44px;
	border-radius: 5px;
	background-color: #22343c;
	color: #adb8be;
	box-shadow: 0 2px 6px #000;
}
.alerta-topo
{
	display: flex;
	justify-content: space-between;
}
.alerta-topo h2
{
	font-size: 38px;
	line-height: 42px;
	color: #e4e8ea;
}
.alerta-topo svg
{
	width: 24px;
	height: 24px;
}
.alerta p
{
	margin: 37px 0 38px;
	line-height: 38px;
}
.grade
{
	position: relative;
	margin-right: 5px;
	border: 2px solid #485962;
	border-radius: 5px;
}
.grade table
{
	width: 100%;
	table-layout: fixed;
	border-collapse: collapse;
	text-align: left;
	font-size: 20px;
}
.g1 { width: 61px; }
.g2 { width: 436px; }
.grade th, .grade td
{
	padding: 0 20px 0 19px;
}
.grade th
{
	height: 59px;
	font-size: 18px;
	font-weight: 600;
	color: #FFF;
	background: linear-gradient(#485962, #485962) right center / 2px 40px no-repeat;
}
.grade th:last-child
{
	background: none;
}
.grade th div
{
	display: flex;
	align-items: center;
	justify-content: space-between;
}
.grade th svg
{
	width: 16px;
	height: 16px;
	margin-top: 4px;
}
.grade td
{
	height: 46px;
	background-color: #e1e8ec;
	color: #555;
	border-top: 2px solid #8a969c;
}
.grade td:first-child
{
	background: linear-gradient(#5d6a71, #5d6a71) right center / 2px 28px no-repeat #e1e8ec;
}
.grade-pe
{
	display: flex;
	align-items: center;
	gap: 11px;
	height: 42px;
	padding-left: 19px;
	font-size: 21px;
	border-top: 4px solid #6d7b82;
}
.caixa.cinza
{
	background-color: #8f9394;
	color: #e4e6e7;
}
.destaque
{
	position: absolute;
	top: 10px;
	left: -33px;
	right: -22px;
	bottom: 29px;
	border: 5px solid #f03e22;
	border-radius: 22px;
}
.alerta-pe
{
	display: flex;
	justify-content: flex-end;
	gap: 20px;
	margin-top: 38px;
	font-size: 22px;
	letter-spacing: 1px;
}
.alerta-pe button
{
	height: 59px;
	border-radius: 5px;
}
.contorno
{
	width: 135px;
	border: 3px solid #4197bb;
	color: #47a6cd;
}
.cheio
{
	width: 114px;
	background-color: #4fb4d7;
	color: #17303c;
}
.com-cursor
{
	position: relative;
}
.cursor
{
	position: absolute;
	left: 3px;
	top: 30px;
	width: 34px;
	height: 46px;
}
.ativacao
{
	position: absolute;
	right: 118px;
	bottom: 76px;
	color: #8d8e8e;
	font-family: "Noto Sans", "Noto Sans CJK KR", sans-serif;
	font-size: 32px;
	line-height: 45px;
}
.ativacao strong
{
	display: block;
	font-size: 42px;
	font-weight: 400;
}

/* barra de tarefas */
.barra
{
	display: flex;
	height: 80px;
	background: linear-gradient(90deg, #001a23, #001824 40%, #000a1e);
	color: #FFF;
	font-family: "Noto Sans", "Noto Sans CJK KR", sans-serif;
}
.iniciar
{
	display: flex;
	align-items: center;
	justify-content: center;
	width: 96px;
}
.iniciar svg
{
	width: 32px;
}
.busca
{
	display: flex;
	align-items: center;
	gap: 20px;
	width: 688px;
	padding-left: 24px;
	background-color: #f2f2f2;
	color: #333;
}
.busca svg
{
	width: 36px;
}
.busca input
{
	flex: 1;
	font-size: 32px;
}
.busca input::placeholder
{
	color: #555;
}
.apps
{
	display: flex;
	gap: 2px;
}
.apps button
{
	display: flex;
	align-items: center;
	justify-content: center;
	width: 96px;
	border-bottom: 5px solid transparent;
	border-top: 5px solid transparent;
}
.apps button:first-child
{
	width: 98px;
	margin-right: 2px;
}
.apps button svg
{
	width: 48px;
	height: 48px;
	stroke: none;
}
.apps .aberto
{
	border-image: linear-gradient(90deg, transparent 9%, #7dbcf0 9%, #7dbcf0 91%, transparent 91%) 0 0 5 0;
}
.apps .foco
{
	background-color: #344750;
	border-image: linear-gradient(#7dbcf0, #7dbcf0) 0 0 5 0;
}
.bandeja
{
	display: flex;
	align-items: center;
	gap: 12px;
	margin-left: auto;
	padding-right: 8px;
}
.bandeja svg
{
	width: 36px;
	height: 36px;
}
.relogio
{
	padding: 0 24px 0 2px;
	text-align: center;
	font-size: 26px;
	line-height: 37px;
}
.bandeja i
{
	width: 2px;
	height: 80px;
	margin-left: 26px;
	background-color: #545b6b;
}
```
